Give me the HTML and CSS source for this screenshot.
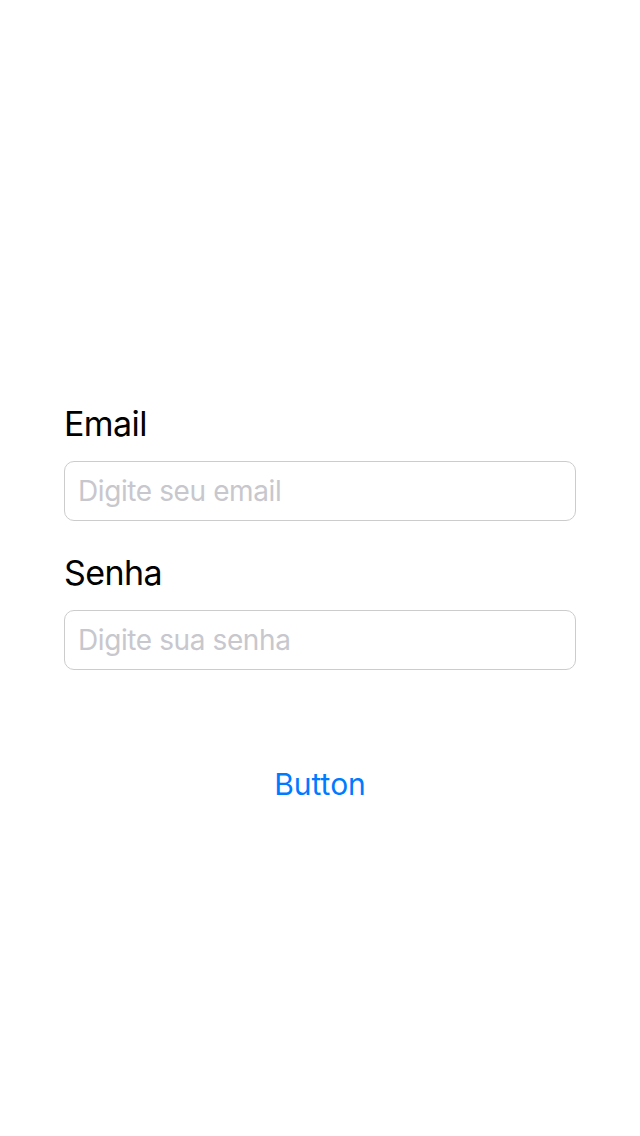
FILE: index.html
```html
<!DOCTYPE html>
<html lang="pt">
<head>
<meta charset="utf-8">
<title>Login</title>
<link rel="stylesheet" href="styles.css">
</head>
<body>
<main class="screen">
  <form class="form">
    <label class="label" for="email">Email</label>
    <input class="field" id="email" type="email" placeholder="Digite seu email">
    <label class="label label-second" for="senha">Senha</label>
    <input class="field" id="senha" type="password" placeholder="Digite sua senha">
    <button class="button" type="button">Button</button>
  </form>
</main>
</body>
</html>
```
FILE: styles.css
```css
html, body {
  margin: 0;
  padding: 0;
  background: #ffffff;
}
.screen {
  width: 640px;
  height: 1136px;
  box-sizing: border-box;
  padding: 404px 64px 0;
  font-family: Inter, "Liberation Sans", sans-serif;
}
.form {
  display: flex;
  flex-direction: column;
}
.label {
  font-size: 34px;
  line-height: 40px;
  letter-spacing: -0.6px;
  color: #000;
  height: 40px;
}
.label-second {
  margin-top: 32px;
}
.field {
  margin-top: 17px;
  height: 60px;
  box-sizing: border-box;
  border: 1px solid #cccccc;
  border-radius: 10px;
  padding: 0 13px;
  font-family: Inter, "Liberation Sans", sans-serif;
  font-size: 28px;
  letter-spacing: -0.4px;
  color: #000;
  outline: none;
}
.field::placeholder {
  color: #c7c7cd;
}
.button {
  align-self: center;
  margin-top: 94px;
  background: none;
  border: none;
  padding: 0;
  font-family: Inter, "Liberation Sans", sans-serif;
  font-size: 30px;
  line-height: 40px;
  color: #007aff;
}
```
